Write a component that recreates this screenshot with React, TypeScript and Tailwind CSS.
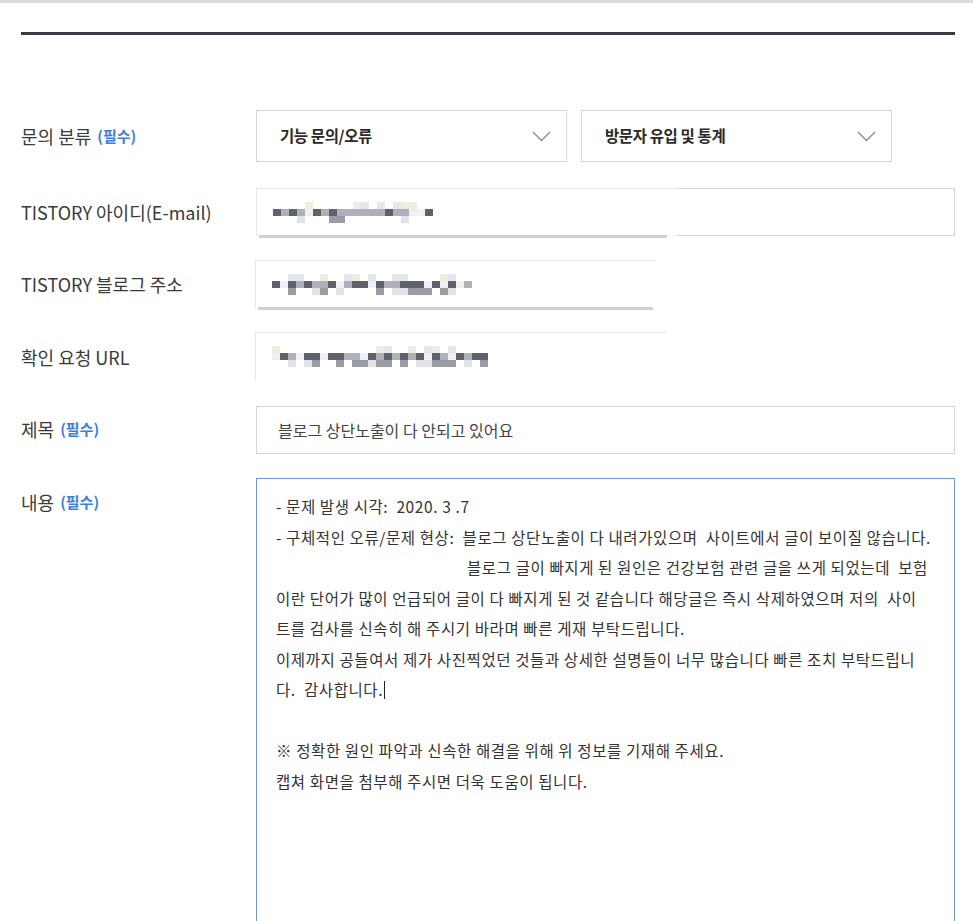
import React from "react"

const font = { fontFamily: '"Noto Sans CJK KR", "Noto Sans", sans-serif' }

// deterministic mosaic used for the censored fields
function Mosaic({ cols, seed }: { cols: number; seed: number }) {
  let s = seed
  const rand = () => {
    s = (s * 9301 + 49297) % 233280
    return s / 233280
  }
  const rects: React.ReactNode[] = []
  for (let i = 0; i < cols; i++) {
    for (let r = 0; r < 3; r++) {
      const v = rand()
      let c = "#ffffff"
      if (r === 0) c = v > 0.75 ? "#e4e6ee" : v > 0.6 ? "#f0ede0" : "#ffffff"
      if (r === 1) c = v > 0.5 ? "#5f626c" : v > 0.25 ? "#aeb1bb" : "#eef0f4"
      if (r === 2) c = v > 0.8 ? "#9a9ca5" : v > 0.65 ? "#e2e3e8" : "#ffffff"
      rects.push(<rect key={`${i}-${r}`} x={i * 8} y={r * 7} width={8} height={7} fill={c} />)
    }
  }
  return (
    <svg width={cols * 8} height={21} shapeRendering="crispEdges">
      {rects}
    </svg>
  )
}

function Required() {
  return <span className="ml-[6px] text-[15px] font-semibold text-[#3d7ed6]">(필수)</span>
}

function Label({ children }: { children: React.ReactNode }) {
  return (
    <div className="flex h-full w-[235px] shrink-0 items-center text-[18px] text-[#3a3a3a]">
      {children}
    </div>
  )
}

function Chevron() {
  return (
    <svg width="19" height="11" viewBox="0 0 19 11" fill="none">
      <path d="M1 1l8.5 8.5L18 1" stroke="#8a8a8a" strokeWidth="1.3" />
    </svg>
  )
}

function SelectBox({ value }: { value: string }) {
  return (
    <div className="flex h-[52px] w-[311px] items-center justify-between border border-[#d6d6d6] bg-white pl-[23px] pr-[15px]">
      <span className="text-[15.5px] font-semibold tracking-[-0.4px] text-[#2a2a2a]">{value}</span>
      <Chevron />
    </div>
  )
}

function CensoredInput({
  patchWidth,
  cols,
  seed,
  showBorder,
  shadow,
}: {
  patchWidth: number
  cols: number
  seed: number
  showBorder: boolean
  shadow: number
}) {
  return (
    <div className={`relative h-[48px] w-[699px] ${showBorder ? "border border-[#d6d6d6]" : ""}`}>
      <div
        className="absolute left-[-1px] top-[-1px] flex h-[48px] items-center border-l border-t border-[#e6e6e6] bg-white pl-[16px]"
        style={{ width: patchWidth }}
      >
        <Mosaic cols={cols} seed={seed} />
        {shadow > 0 && (
          <div className="absolute bottom-[-2px] left-[2px] h-[3px] bg-[#cfcfcf]" style={{ width: shadow }} />
        )}
      </div>
    </div>
  )
}

export default function App() {
  return (
    <div className="min-h-screen bg-white" style={font}>
      <div className="h-[3px] bg-[#dcdcdc]" />
      <div className="pl-[21px] pr-[18px] pt-[29px]">
        <div className="h-[3px] bg-[#393c44]" />

        <div className="mt-[75px] flex flex-col">
          <div className="flex h-[52px] items-center">
            <Label>
              문의 분류<Required />
            </Label>
            <div className="flex gap-[14px]">
              <SelectBox value="기능 문의/오류" />
              <SelectBox value="방문자 유입 및 통계" />
            </div>
          </div>

          <div className="mt-[26px] flex flex-col gap-[24.5px]">
            <div className="flex h-[48px] items-center">
              <Label>TISTORY 아이디(E-mail)</Label>
              <CensoredInput patchWidth={421} cols={20} seed={7} showBorder shadow={408} />
            </div>
            <div className="flex h-[48px] items-center">
              <Label>TISTORY 블로그 주소</Label>
              <CensoredInput patchWidth={400} cols={25} seed={31} showBorder={false} shadow={395} />
            </div>
            <div className="flex h-[48px] items-center">
              <Label>확인 요청 URL</Label>
              <CensoredInput patchWidth={412} cols={27} seed={113} showBorder={false} shadow={0} />
            </div>
            <div className="flex h-[48px] items-center">
              <Label>
                제목<Required />
              </Label>
              <div className="flex h-[48px] w-[699px] items-center border border-[#d6d6d6] pl-[21px] text-[16px] text-[#444]">
                블로그 상단노출이 다 안되고 있어요
              </div>
            </div>

            <div className="flex items-start">
              <div className="h-[48px]">
                <Label>
                  내용<Required />
                </Label>
              </div>
              <div className="h-[500px] w-[699px] border border-[#6f9bd8] pl-[19px] pt-[12px] text-[15.5px] leading-[30.5px] tracking-[0.6px] text-[#333]">
                <div className="whitespace-pre">- 문제 발생 시각:  2020. 3 .7</div>
                <div className="whitespace-pre">
                  - 구체적인 오류/문제 현상:  블로그 상단노출이 다 내려가있으며  사이트에서 글이 보이질 않습니다.
                </div>
                <div className="whitespace-pre pl-[191px]">
                  블로그 글이 빠지게 된 원인은 건강보험 관련 글을 쓰게 되었는데  보험
                </div>
                <div className="whitespace-pre">
                  이란 단어가 많이 언급되어 글이 다 빠지게 된 것 같습니다 해당글은 즉시 삭제하였으며 저의  사이
                </div>
                <div className="whitespace-pre">트를 검사를 신속히 해 주시기 바라며 빠른 게재 부탁드립니다.</div>
                <div className="whitespace-pre">
                  이제까지 공들여서 제가 사진찍었던 것들과 상세한 설명들이 너무 많습니다 빠른 조치 부탁드립니
                </div>
                <div className="whitespace-pre">
                  다.  감사합니다.
                  <span className="ml-[1px] inline-block h-[18px] w-px translate-y-[3px] bg-[#222]" />
                </div>
                <div className="h-[30.5px]" />
                <div className="whitespace-pre">※ 정확한 원인 파악과 신속한 해결을 위해 위 정보를 기재해 주세요.</div>
                <div className="whitespace-pre">캡쳐 화면을 첨부해 주시면 더욱 도움이 됩니다.</div>
              </div>
            </div>
          </div>
        </div>
      </div>
    </div>
  )
}
